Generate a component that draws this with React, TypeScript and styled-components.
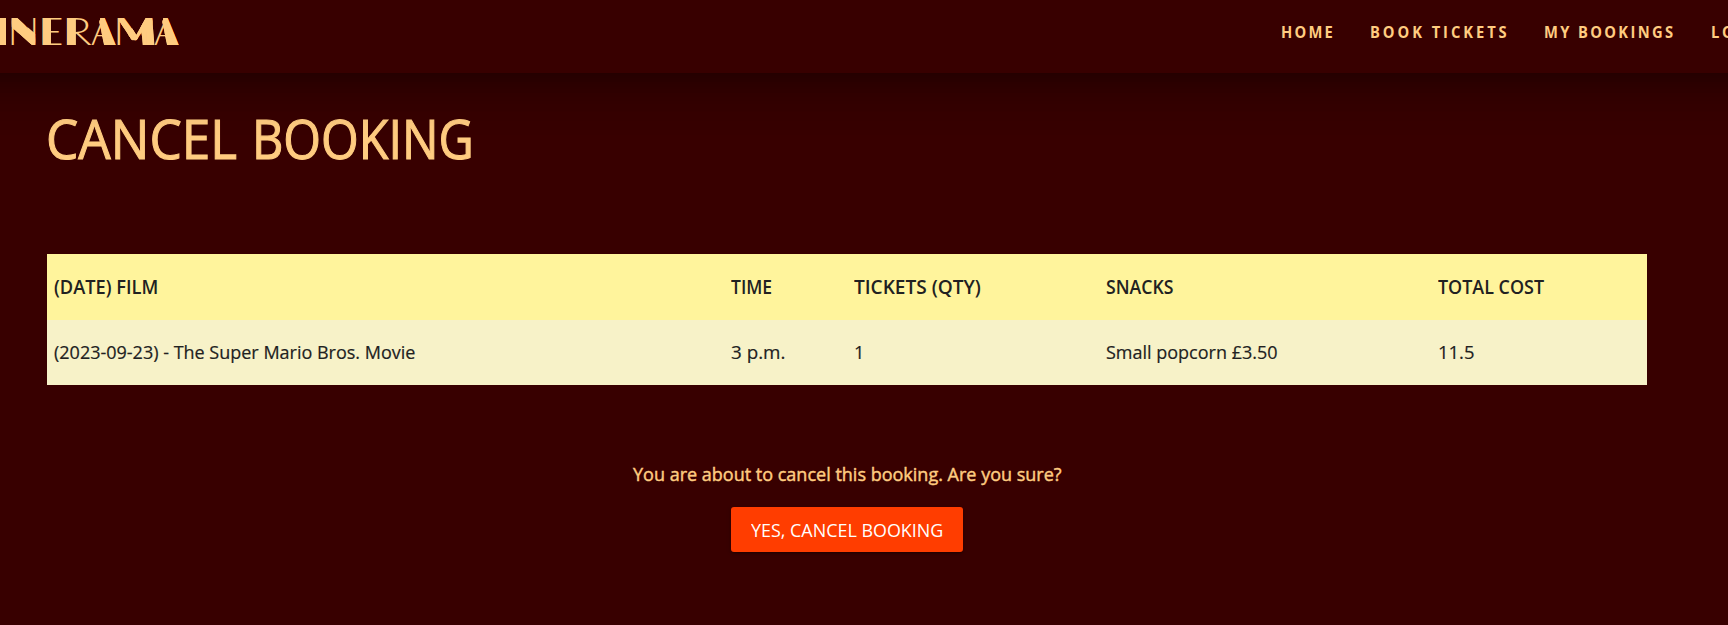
import React from 'react';
import styled, { createGlobalStyle } from 'styled-components';

const GlobalStyle = createGlobalStyle`
  * { box-sizing: border-box; }
  html, body { margin: 0; background: #380000; overflow: hidden; }
  body { font-family: "Open Sans", "Noto Sans", sans-serif; color: #212121; }
`;

const Page = styled.div`
  width: 1728px;
  height: 625px;
  overflow: hidden;
  background: #380000;
`;

const Header = styled.header`
  position: relative;
  z-index: 2;
  display: flex;
  justify-content: space-between;
  width: 1928px;
  height: 73px;
  margin-left: -100px;
  padding: 0 100px;
  background: #380000;
  color: #ffcc80;
  box-shadow: 0 24px 38px 3px rgba(0, 0, 0, 0.14), 0 9px 46px 8px rgba(0, 0, 0, 0.12),
    0 11px 15px -7px rgba(0, 0, 0, 0.2);
`;

const Logo = styled.div`
  display: flex;
  height: 54px;
  margin-left: -4px;
  padding-top: 7px;
  font-family: Lato, sans-serif;
  font-size: 38px;
  line-height: 46px;
`;

const spread = (from: number, to: number) =>
  Array.from({ length: to - from + 1 }, (_, i) => `${from + i}px 0 #ffcc80`).join(', ');

/* Deco lettering: a light letter whose main stroke is thickened inside a clipped area. */
const LogoLetter = styled.span<{ $width: number; $scale: number; $from: number; $to: number; $clip: string }>`
  position: relative;
  display: flex;
  flex: none;
  justify-content: center;
  width: ${(p) => p.$width}px;
  font-weight: 300;
  transform: scaleX(${(p) => p.$scale});

  &::before {
    content: attr(data-letter);
    position: absolute;
    inset: 0;
    text-align: center;
    text-shadow: ${(p) => spread(p.$from, p.$to)};
    clip-path: polygon(${(p) => p.$clip});
  }
`;

const Nav = styled.nav`
  display: flex;
  width: 447px;
`;

const NavItem = styled.a<{ $width: number; $track: number }>`
  flex: none;
  width: ${(p) => p.$width}px;
  font-size: 16px;
  font-weight: 700;
  line-height: 65px;
  letter-spacing: ${(p) => p.$track}px;
  white-space: nowrap;
`;

const Fit = styled.span<{ $scale: number }>`
  display: inline-block;
  transform: scaleX(${(p) => p.$scale});
  transform-origin: left center;
  white-space: nowrap;
`;

const Main = styled.main`
  width: 1600px;
  margin-left: 47px;
`;

const Title = styled.h1`
  display: grid;
  grid-template-columns: 206px 1fr;
  margin: 0 0 0 -1px;
  padding-top: 27px;
  height: 181px;
  font-size: 55px;
  font-weight: 400;
  line-height: 76px;
  color: #ffcc80;
  -webkit-text-stroke: 1.1px #ffcc80;
`;

const Table = styled.div`
  background: #f7f2c8;
  font-size: 19px;
`;

const Row = styled.div<{ $head?: boolean }>`
  display: grid;
  grid-template-columns: 677px 123px 252px 332px 1fr;
  align-items: center;
  height: ${(p) => (p.$head ? 66 : 65)}px;
  padding: 0 0 ${(p) => (p.$head ? 0 : 2)}px 7px;
  background: ${(p) => (p.$head ? '#fff49c' : '#f7f2c8')};
  font-weight: ${(p) => (p.$head ? 600 : 400)};
  -webkit-text-stroke: ${(p) => (p.$head ? 0 : 0.2)}px #212121;
`;

const Confirm = styled.section`
  display: flex;
  flex-direction: column;
  align-items: center;
  padding-top: 75px;
`;

const Question = styled.p`
  width: 429px;
  margin: 0;
  font-size: 19px;
  line-height: 28px;
  color: #ffcc80;
  -webkit-text-stroke: 0.45px #ffcc80;
`;

const CancelButton = styled.button`
  width: 232px;
  height: 45px;
  margin-top: 19px;
  padding: 0 0 0 20px;
  border: 0;
  border-radius: 3px;
  background: #ff3d00;
  color: #fff;
  font: 400 18px "Open Sans", sans-serif;
  text-align: left;
  box-shadow: 0 2px 2px 0 rgba(0, 0, 0, 0.14), 0 3px 1px -2px rgba(0, 0, 0, 0.12),
    0 1px 5px 0 rgba(0, 0, 0, 0.2);
`;

const logo = [
  { letter: 'I', width: 12, scale: 1, from: -4, to: 4, clip: '0 0, 10px 0, 10px 46px, 0 46px' },
  { letter: 'N', width: 31, scale: 1.13, from: -5, to: 5, clip: '5px 9px, 8px 9px, 26px 27px, 26px 38px, 23px 38px, 5px 20px' },
  { letter: 'E', width: 24, scale: 1.15, from: 0, to: 7, clip: '0 0, 12px 0, 12px 46px, 0 46px' },
  { letter: 'R', width: 28, scale: 1.3, from: 0, to: 7, clip: '0 0, 13px 0, 13px 46px, 0 46px' },
  { letter: 'A', width: 25, scale: 1, from: -10, to: 0, clip: '10px 8px, 14px 8px, 26px 38px, 13px 38px, 8.5px 15px' },
  { letter: 'M', width: 38, scale: 1.3, from: -8, to: 3, clip: '7px 9px, 11px 9px, 20px 28px, 26px 14px, 28px 9px, 32px 9px, 34px 38px, 25px 38px, 24px 24px, 20px 34px, 17px 34px, 8px 16px' },
  { letter: 'A', width: 25, scale: 1, from: -10, to: 0, clip: '10px 8px, 14px 8px, 26px 38px, 13px 38px, 8.5px 15px' },
];

const links = [
  { label: 'HOME', width: 89, scale: 0.92, track: 2.4 },
  { label: 'BOOK TICKETS', width: 173.5, scale: 0.92, track: 3.2 },
  { label: 'MY BOOKINGS', width: 167, scale: 0.92, track: 2.55 },
  { label: 'LOGOUT', width: 120, scale: 0.92, track: 3 },
];

const headings = [
  { text: '(DATE) FILM', scale: 0.96 },
  { text: 'TIME', scale: 0.92 },
  { text: 'TICKETS (QTY)', scale: 1.004 },
  { text: 'SNACKS', scale: 0.93 },
  { text: 'TOTAL COST', scale: 0.943 },
];

const booking = [
  { text: '(2023-09-23) - The Super Mario Bros. Movie', scale: 0.947 },
  { text: '3 p.m.', scale: 0.99 },
  { text: '1', scale: 0.95 },
  { text: 'Small popcorn £3.50', scale: 0.947 },
  { text: '11.5', scale: 0.97 },
];

export default function App() {
  return (
    <Page>
      <GlobalStyle />
      <Header>
        <Logo>
          {logo.map((l, i) => (
            <LogoLetter
              key={i}
              data-letter={l.letter}
              $width={l.width}
              $scale={l.scale}
              $from={l.from}
              $to={l.to}
              $clip={l.clip}
            >
              {l.letter}
            </LogoLetter>
          ))}
        </Logo>
        <Nav>
          {links.map((l) => (
            <NavItem key={l.label} $width={l.width} $track={l.track}>
              <Fit $scale={l.scale}>{l.label}</Fit>
            </NavItem>
          ))}
        </Nav>
      </Header>
      <Main>
        <Title>
          <Fit $scale={0.933}>CANCEL</Fit>
          <Fit $scale={0.882}>BOOKING</Fit>
        </Title>
        <Table>
          <Row $head>
            {headings.map((c) => <div key={c.text}><Fit $scale={c.scale}>{c.text}</Fit></div>)}
          </Row>
          <Row>
            {booking.map((c) => <div key={c.text}><Fit $scale={c.scale}>{c.text}</Fit></div>)}
          </Row>
        </Table>
        <Confirm>
          <Question><Fit $scale={0.948}>You are about to cancel this booking. Are you sure?</Fit></Question>
          <CancelButton><Fit $scale={0.995}>YES, CANCEL BOOKING</Fit></CancelButton>
        </Confirm>
      </Main>
    </Page>
  );
}
